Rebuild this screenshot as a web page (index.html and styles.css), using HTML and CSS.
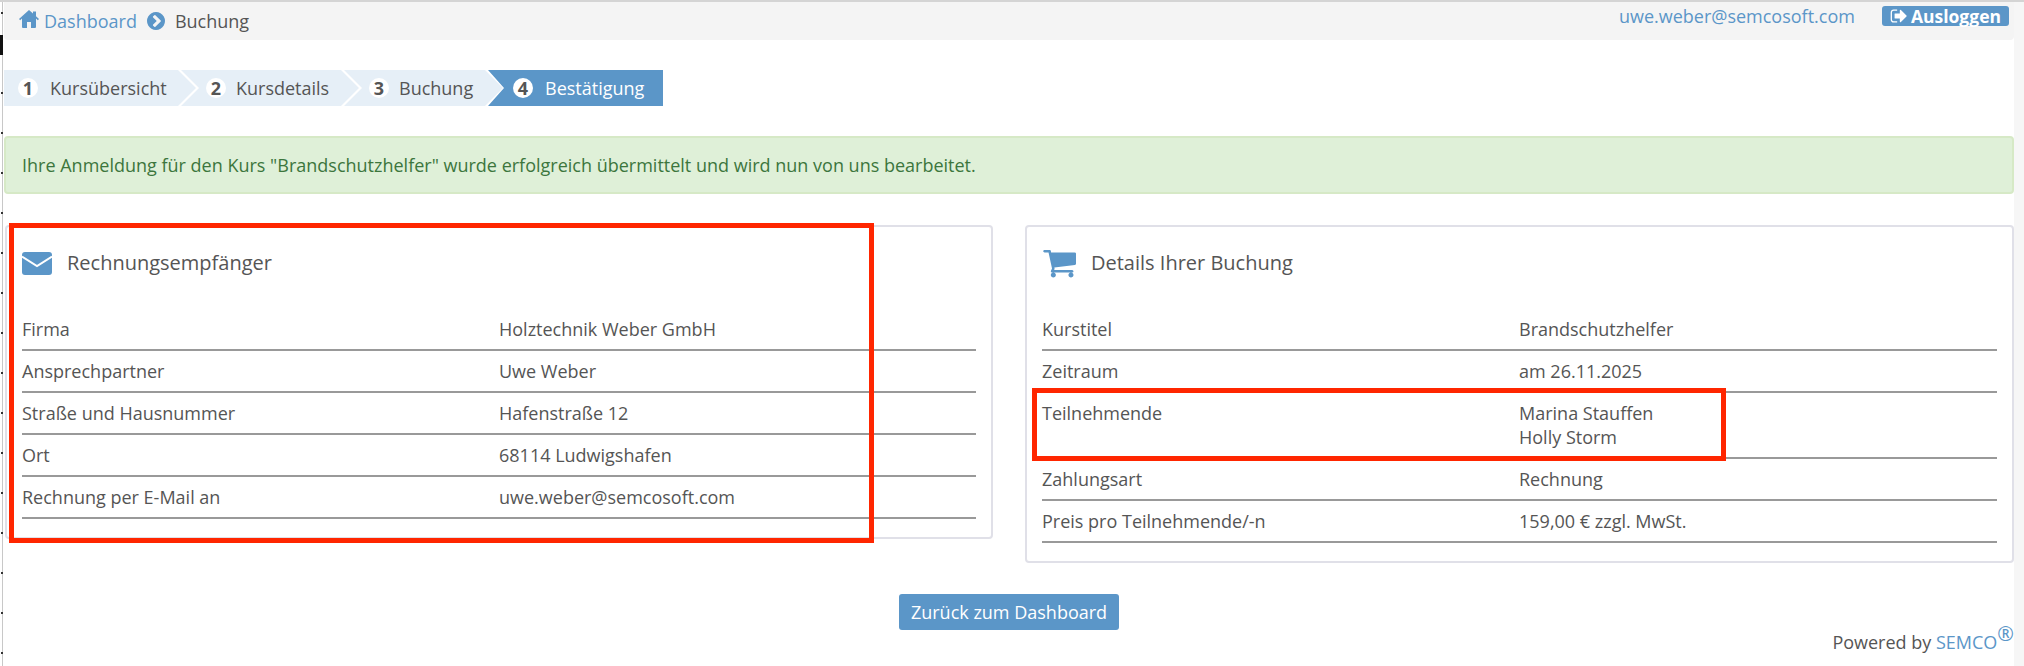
FILE: index.html
```html
<!DOCTYPE html>
<html lang="de">
<head>
<meta charset="utf-8">
<title>Buchung</title>
<link rel="stylesheet" href="styles.css">
</head>
<body>
<div class="edge"><span class="edge-mark"></span></div>
<div class="page">
  <header class="topbar">
    <nav class="crumbs">
      <svg class="ico-home" viewBox="0 0 20 18"><path d="M10 0 14 3.6V1.5H17V6.3L20 9 18.8 10.2 17 8.6V17a1 1 0 0 1-1 1H12V12H8V18H4a1 1 0 0 1-1-1V8.6L1.2 10.2 0 9Z"/></svg>
      <a class="link crumb-link">Dashboard</a>
      <svg class="ico-chev" viewBox="128 128 1536 1536"><path d="M845 1395l454-454q19-19 19-45t-19-45l-454-454q-19-19-45-19t-45 19l-102 102q-19 19-19 45t19 45l307 307-307 307q-19 19-19 45t19 45l102 102q19 19 45 19t45-19zm819-499q0 209-103 385.5t-279.5 279.5-385.5 103-385.5-103-279.5-279.5-103-385.5 103-385.5 279.5-279.5 385.5-103 385.5 103 279.5 279.5 103 385.5z"/></svg>
      <span>Buchung</span>
    </nav>
    <div class="user">
      <a class="link user-mail">uwe.weber@semcosoft.com</a>
      <a class="logout">
        <svg class="ico-out" viewBox="0 128 1664 1536"><path d="M704 1440q0 4 1 20t.5 26.5-3 23.5-10 19.5-20.5 6.5h-320q-119 0-203.5-84.5t-84.5-203.5v-704q0-119 84.5-203.5t203.5-84.5h320q13 0 22.5 9.5t9.5 22.5q0 4 1 20t.5 26.5-3 23.5-10 19.5-20.5 6.5h-320q-66 0-113 47t-47 113v704q0 66 47 113t113 47h312l11.5 1 11.5 3 8 5.5 7 9 2 13.5zm928-544q0 26-19 45l-544 544q-19 19-45 19t-45-19-19-45v-288h-448q-26 0-45-19t-19-45v-384q0-26 19-45t45-19h448v-288q0-26 19-45t45-19 45 19l544 544q19 19 19 45z"/></svg>
        Ausloggen
      </a>
    </div>
  </header>

  <ol class="steps">
    <li class="step step-first"><span class="num">1</span>Kursübersicht</li>
    <li class="step step-second"><span class="num num-tight">2</span>Kursdetails</li>
    <li class="step step-third"><span class="num num-tight">3</span>Buchung</li>
    <li class="step step-active"><span class="num">4</span>Bestätigung</li>
  </ol>

  <div class="alert">Ihre Anmeldung für den Kurs "Brandschutzhelfer" wurde erfolgreich übermittelt und wird nun von uns bearbeitet.</div>

  <div class="panels">
    <section class="panel">
      <h2 class="panel-title">
        <svg class="ico-mail" viewBox="0 0 30 23"><rect width="30" height="23" rx="3"/><path class="mail-v" d="M0 4.5 15 14 30 4.5"/></svg>
        Rechnungsempfänger
      </h2>
      <dl class="rows">
        <div class="row"><dt>Firma</dt><dd>Holztechnik Weber GmbH</dd></div>
        <div class="row"><dt>Ansprechpartner</dt><dd>Uwe Weber</dd></div>
        <div class="row"><dt>Straße und Hausnummer</dt><dd>Hafenstraße 12</dd></div>
        <div class="row"><dt>Ort</dt><dd>68114 Ludwigshafen</dd></div>
        <div class="row"><dt>Rechnung per E-Mail an</dt><dd>uwe.weber@semcosoft.com</dd></div>
      </dl>
      <div class="mark mark-billing"></div>
    </section>
    <section class="panel">
      <h2 class="panel-title">
        <svg class="ico-cart" viewBox="0 128 1728 1536"><path d="M704 1536q0 52-38 90t-90 38-90-38-38-90 38-90 90-38 90 38 38 90zm896 0q0 52-38 90t-90 38-90-38-38-90 38-90 90-38 90 38 38 90zm128-1088v512q0 24-16.5 42.5t-40.5 21.5l-1044 122q13 60 13 70 0 16-24 64h920q26 0 45 19t19 45-19 45-45 19h-1024q-26 0-45-19t-19-45q0-11 8-31.5t16-36 21.5-40 15.5-29.5l-177-823h-204q-26 0-45-19t-19-45 19-45 45-19h256q16 0 28.5 6.5t19.5 15.5 13 24.5 8 26 5.5 29.5 4.5 26h1201q26 0 45 19t19 45z"/></svg>
        Details Ihrer Buchung
      </h2>
      <dl class="rows">
        <div class="row"><dt>Kurstitel</dt><dd>Brandschutzhelfer</dd></div>
        <div class="row"><dt>Zeitraum</dt><dd>am 26.11.2025</dd></div>
        <div class="row"><dt>Teilnehmende</dt><dd>Marina Stauffen<br>Holly Storm</dd></div>
        <div class="row"><dt>Zahlungsart</dt><dd>Rechnung</dd></div>
        <div class="row"><dt>Preis pro Teilnehmende/-n</dt><dd>159,00 € zzgl. MwSt.</dd></div>
      </dl>
      <div class="mark mark-people"></div>
    </section>
  </div>

  <div class="actions"><a class="btn">Zurück zum Dashboard</a></div>
  <footer class="powered">Powered by <a class="link">SEMCO</a><sup class="reg">®</sup></footer>
</div>
</body>
</html>
```
FILE: styles.css
```css
* { box-sizing: border-box; }
html, body { margin: 0; height: 666px; overflow: hidden; }
body {
  display: flex;
  background: #fff;
  color: #555;
  font: 18px/24px "Open Sans", sans-serif;
  border-top: 2px solid #d4d4d4;
}
.edge {
  position: relative;
  flex: none;
  width: 4px;
  background:
    repeating-linear-gradient(to bottom, transparent 0 10px, #333 10px 12px, transparent 12px 40px) 1px 0 / 2px 100% no-repeat,
    linear-gradient(#c8c8c8, #c8c8c8) 2px 0 / 1px 100% no-repeat;
}
.edge-mark { position: absolute; left: 0; top: 33px; width: 3px; height: 20px; background: #111; }
.page { flex: none; width: 2010px; }
body::after { content: ""; flex: 1; background: #f6f6f6; }
.link { color: #5b96c8; }

.topbar {
  display: flex;
  justify-content: space-between;
  height: 38px;
  padding: 0 5px 0 15px;
  background: #f4f4f4;
  border-radius: 0 0 4px 4px;
}
.crumbs { display: flex; align-items: center; height: 38px; }
.ico-home { width: 20px; height: 18px; fill: #5b96c8; margin: 0 5px 4px 0; }
.crumb-link { margin-right: 10px; }
.ico-chev { width: 18px; height: 18px; fill: #5b96c8; margin-right: 10px; }
.user { display: flex; align-items: flex-start; }
.user-mail { margin: 2px 27px 0 0; }
.logout {
  display: flex;
  align-items: center;
  gap: 4px;
  height: 20px;
  margin-top: 4px;
  padding: 0 8px;
  border-radius: 3px;
  background: #5b96c8;
  color: #fff;
  font-size: 17.5px;
  font-weight: 700;
}
.ico-out { width: 17px; height: 16px; fill: #fff; }

.steps {
  display: flex;
  height: 36px;
  margin: 30px 0;
  padding: 0;
  list-style: none;
}
.step {
  display: flex;
  align-items: center;
  height: 36px;
  padding-left: 25px;
  background: #e6eff7;
  clip-path: polygon(0 0, calc(100% - 18px) 0, 100% 50%, calc(100% - 18px) 100%, 0 100%, 18px 50%);
  margin-right: -15px;
}
.step-first { width: 192px; padding-left: 14px; clip-path: polygon(0 0, calc(100% - 18px) 0, 100% 50%, calc(100% - 18px) 100%, 0 100%); }
.step-second { width: 178px; }
.step-third { width: 159px; }
.step-active { width: 175px; margin-right: 0; background: #5b96c8; color: #fff; clip-path: polygon(0 0, 100% 0, 100% 100%, 0 100%, 16px 50%); }
.num {
  display: flex;
  align-items: center;
  justify-content: center;
  flex: none;
  width: 20px;
  height: 20px;
  margin-right: 12px;
  border-radius: 50%;
  background: #fff;
  color: #555;
  font-weight: 700;
}
.num-tight { margin-right: 10px; }

.alert {
  display: flex;
  align-items: center;
  height: 58px;
  padding: 0 16px;
  border: 2px solid #d6e9c6;
  border-radius: 4px;
  background: #dff0d8;
  color: #3c763d;
}

.panels {
  display: flex;
  align-items: flex-start;
  gap: 32px;
  margin: 31px -1px 0 1px;
}
.panel {
  position: relative;
  flex: none;
  width: 988px;
  padding: 0 15px 18px 15px;
  border: 2px solid #e0e0e8;
  border-radius: 4px;
  background: #fff;
}
.panel + .panel { width: 989px; }
.panel-title {
  display: flex;
  align-items: center;
  height: 82px;
  margin: 0;
  padding-bottom: 10px;
  font-size: 20px;
  font-weight: 400;
}
.ico-mail { width: 30px; height: 23px; fill: #5b96c8; margin-right: 15px; }
.mail-v { fill: none; stroke: #fff; stroke-width: 2; }
.ico-cart { width: 34px; height: 31px; fill: #5b96c8; margin: -2px 15px 0 0; }
.rows { margin: 0; }
.row {
  display: flex;
  padding: 8px 0;
  border-bottom: 2px solid #999;
}
.row dt { flex: none; width: 477px; }
.row dd { margin: 0; }

.mark { position: absolute; border: 5px solid #ff2600; pointer-events: none; }
.mark-billing { left: 2px; top: -4px; width: 865px; height: 320px; }
.mark-people { left: 5px; top: 161px; width: 694px; height: 73px; }

.actions { display: flex; justify-content: center; margin-top: 31px; }
.btn {
  display: flex;
  align-items: center;
  justify-content: center;
  width: 220px;
  height: 36px;
  border-radius: 3px;
  background: #5b96c8;
  color: #fff;
  font-weight: 500;
}
.powered { text-align: right; margin-top: 0; }
.reg { color: #5b96c8; font-size: 20px; line-height: 0; vertical-align: 8px; }
```
